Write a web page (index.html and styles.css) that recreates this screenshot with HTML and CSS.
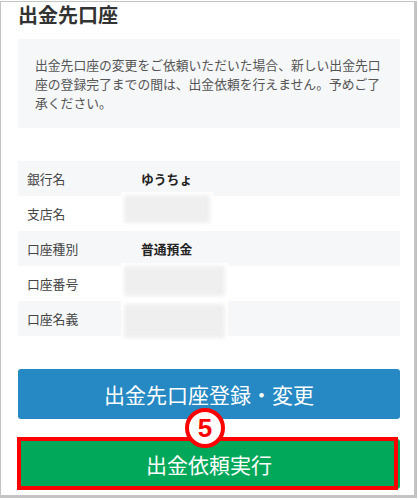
FILE: index.html
```html
<!DOCTYPE html>
<html lang="ja">
  <head>
    <meta charset="UTF-8" />
    <meta name="viewport" content="width=device-width, initial-scale=1.0" />
    <title>出金先口座</title>
    <link rel="stylesheet" href="styles.css">
  </head>
  <body>
    <div class="frame">
      <h2>出金先口座</h2>

      <div class="notice">
        出金先口座の変更をご依頼いただいた場合、新しい出金先口座の登録完了までの間は、出金依頼を行えません。予めご了承ください。
      </div>

      <table class="account">
        <tbody>
          <tr>
            <th>銀行名</th>
            <td><span class="value">ゆうちょ</span></td>
          </tr>
          <tr>
            <th>支店名</th>
            <td><div class="redact redact-short"></div></td>
          </tr>
          <tr>
            <th>口座種別</th>
            <td><span class="value">普通預金</span></td>
          </tr>
          <tr>
            <th>口座番号</th>
            <td><div class="redact redact-long"></div></td>
          </tr>
          <tr>
            <th>口座名義</th>
            <td><div class="redact redact-last"></div></td>
          </tr>
        </tbody>
      </table>

      <button class="btn btn-blue">出金先口座登録・変更</button>

      <div class="step">
        <button class="btn btn-green">出金依頼実行</button>
        <div class="highlight"></div>
        <div class="badge">5</div>
      </div>
    </div>
  </body>
</html>
```

FILE: styles.css
```css
body {
  font-family: "Noto Sans CJK JP", "Noto Sans", sans-serif;
  margin: 0;
  padding: 0;
  background-color: white;
}

.frame {
  box-sizing: border-box;
  width: 417px;
  height: 497px;
  margin: 1px 0 0 0;
  padding: 0 14px 0 17px;
  border: 1px solid #c4c4c4;
  border-right: 3px solid #c4c4c4;
  border-bottom: 3px solid #c4c4c4;
  overflow: hidden;
}

h2 {
  margin: 0;
  font-size: 20px;
  line-height: 25px;
  font-weight: bold;
  color: #333;
}

.notice {
  margin-top: 12px;
  padding: 16px 17px 16px 17px;
  background-color: #f6f7f9;
  color: #555;
  font-size: 12.8px;
  line-height: 19px;
}

.account {
  width: 100%;
  margin-top: 33px;
  border-collapse: collapse;
  font-size: 12.8px;
}

.account tr {
  height: 35px;
}

.account tr:nth-child(odd) {
  background-color: #f6f7f9;
}

.account th {
  width: 94px;
  padding: 0 0 0 9px;
  text-align: left;
  font-weight: normal;
  color: #444;
}

.account td {
  position: relative;
  padding: 0;
}

.value {
  padding-left: 20px;
  font-weight: bold;
  color: #222;
}

.redact {
  position: absolute;
  left: 0;
  background-color: #efefef;
  box-shadow: inset 0 0 4px 3px #fff;
}

.redact-short {
  top: -4px;
  width: 92px;
  height: 34px;
}

.redact-long {
  top: -3px;
  width: 107px;
  height: 36px;
}

.redact-last {
  top: 0;
  width: 107px;
  height: 40px;
}

.btn {
  display: block;
  width: 100%;
  height: 50px;
  border: none;
  border-radius: 3px;
  color: white;
  font-family: "Noto Sans CJK JP", "Noto Sans", sans-serif;
  font-size: 21px;
  cursor: pointer;
}

.btn-blue {
  margin-top: 33px;
  background-color: #2689c3;
}

.step {
  position: relative;
  margin-top: 20px;
}

.btn-green {
  background-color: #02a85a;
}

.highlight {
  position: absolute;
  left: -1px;
  top: -2px;
  width: 373px;
  height: 45px;
  border: 4px solid #ff0000;
}

.badge {
  position: absolute;
  left: 167px;
  top: -31px;
  box-sizing: border-box;
  width: 40px;
  height: 40px;
  border: 4px solid #ff0000;
  border-radius: 50%;
  background-color: white;
  color: #ff0000;
  font-family: "Liberation Sans", Arial, sans-serif;
  font-size: 26px;
  font-weight: bold;
  line-height: 32px;
  text-align: center;
}
```
